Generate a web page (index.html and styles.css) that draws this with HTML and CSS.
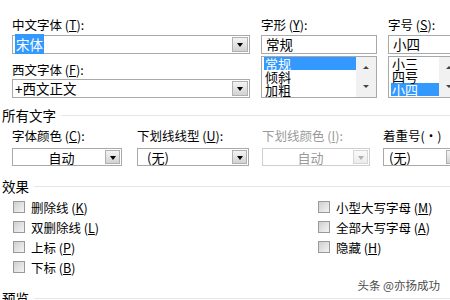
FILE: index.html
```html
<!DOCTYPE html>
<html lang="zh-CN">
<head>
    <meta charset="UTF-8">
    <meta name="viewport" content="width=device-width, initial-scale=1.0">
    <title>字体</title>
    <link rel="stylesheet" href="styles.css">
</head>
<body>
    <div class="dialog">
        <div class="font-grid">
            <div class="col">
                <label class="field-label">中文字体 (<u>T</u>):</label>
                <div class="combo">
                    <span class="combo-text"><span class="sel">宋体</span></span>
                    <span class="drop-btn"></span>
                </div>
                <label class="field-label second">西文字体 (<u>F</u>):</label>
                <div class="combo">
                    <span class="combo-text">+西文正文</span>
                    <span class="drop-btn"></span>
                </div>
            </div>

            <div class="col">
                <label class="field-label">字形 (<u>Y</u>):</label>
                <div class="textbox">常规</div>
                <div class="listbox">
                    <ul>
                        <li class="selected">常规</li>
                        <li>倾斜</li>
                        <li>加粗</li>
                    </ul>
                    <div class="scrollbar">
                        <span class="arrow up"></span>
                        <span class="arrow down"></span>
                    </div>
                </div>
            </div>

            <div class="col">
                <label class="field-label">字号 (<u>S</u>):</label>
                <div class="textbox">小四</div>
                <div class="listbox">
                    <ul>
                        <li>小三</li>
                        <li>四号</li>
                        <li class="selected">小四</li>
                    </ul>
                    <div class="scrollbar">
                        <span class="arrow up"></span>
                        <span class="arrow down"></span>
                    </div>
                </div>
            </div>
        </div>

        <div class="section-title">所有文字</div>

        <div class="all-text">
            <div class="cell">
                <label class="field-label">字体颜色 (<u>C</u>):</label>
                <div class="select w1">
                    <span class="select-text center">自动</span>
                    <span class="drop-btn"></span>
                </div>
            </div>
            <div class="cell">
                <label class="field-label">下划线线型 (<u>U</u>):</label>
                <div class="select w2">
                    <span class="select-text pad">(无)</span>
                    <span class="drop-btn"></span>
                </div>
            </div>
            <div class="cell disabled">
                <label class="field-label">下划线颜色 (<u>I</u>):</label>
                <div class="select w3">
                    <span class="select-text center">自动</span>
                    <span class="drop-btn"></span>
                </div>
            </div>
            <div class="cell">
                <label class="field-label">着重号(·)</label>
                <div class="select w4">
                    <span class="select-text">(无)</span>
                    <span class="drop-btn"></span>
                </div>
            </div>
        </div>

        <div class="section-title">效果</div>

        <div class="effects">
            <label class="check"><span class="box"></span>删除线 (<u>K</u>)</label>
            <label class="check"><span class="box"></span>小型大写字母 (<u>M</u>)</label>
            <label class="check"><span class="box"></span>双删除线 (<u>L</u>)</label>
            <label class="check"><span class="box"></span>全部大写字母 (<u>A</u>)</label>
            <label class="check"><span class="box"></span>上标 (<u>P</u>)</label>
            <label class="check"><span class="box"></span>隐藏 (<u>H</u>)</label>
            <label class="check"><span class="box"></span>下标 (<u>B</u>)</label>
        </div>

        <div class="section-title preview">预览</div>
    </div>

    <div class="watermark">头条 @亦扬成功</div>
</body>
</html>
```

FILE: styles.css
```css
* {
    margin: 0;
    padding: 0;
    box-sizing: border-box;
}

body {
    width: 450px;
    height: 300px;
    overflow: hidden;
    position: relative;
    background: #fff;
    color: #000;
    font-family: "Noto Sans CJK SC", sans-serif;
    font-size: 12.5px;
}

.dialog {
    padding-top: 17px;
}

.field-label {
    display: block;
    height: 16px;
    line-height: 16px;
    margin-bottom: 2px;
    white-space: nowrap;
}

.field-label.second {
    margin-top: 8px;
    margin-bottom: 1px;
}

/* top block: font / style / size */
.font-grid {
    display: grid;
    grid-template-columns: 238px 116px 72px;
    column-gap: 11px;
    padding-left: 12px;
}

.combo,
.textbox,
.select {
    display: flex;
    align-items: center;
    height: 19px;
    border: 1px solid #a9a9a9;
    background: #fff;
    padding: 1px;
    line-height: 15px;
    white-space: nowrap;
}

.combo-text {
    flex: 1;
    padding-left: 1px;
    font-size: 13.5px;
}

.textbox {
    padding-left: 4px;
    font-size: 13.5px;
}

.sel {
    background: #3399ff;
    color: #fff;
    padding: 0 1px;
}

.drop-btn {
    position: relative;
    width: 16px;
    height: 15px;
    border: 1px solid #b0b0b0;
    background: linear-gradient(#f4f4f4, #d2d2d2);
}

.drop-btn::after {
    content: "";
    position: absolute;
    left: 4px;
    top: 5px;
    border-left: 3.5px solid transparent;
    border-right: 3.5px solid transparent;
    border-top: 4px solid #000;
}

.listbox {
    display: flex;
    height: 42px;
    margin-top: 2px;
    border: 1px solid #a9a9a9;
    background: #fff;
}

.listbox ul {
    flex: 1;
    list-style: none;
    padding-left: 2px;
}

.listbox li {
    height: 13px;
    line-height: 13px;
    font-size: 13px;
    padding-left: 1px;
    white-space: nowrap;
}

.listbox li.selected {
    background: #3399ff;
    color: #fff;
}

.scrollbar {
    position: relative;
    width: 20px;
    background: #f1f1f1;
}

.arrow {
    position: absolute;
    left: 7px;
    border-left: 3px solid transparent;
    border-right: 3px solid transparent;
}

.arrow.up {
    top: 9px;
    border-bottom: 3px solid #444;
}

.arrow.down {
    bottom: 9px;
    border-top: 3px solid #444;
}

/* section headings with rule */
.section-title {
    display: flex;
    align-items: center;
    gap: 5px;
    height: 16px;
    line-height: 16px;
    margin-top: 9px;
    padding-left: 2px;
    font-size: 13.5px;
}

.section-title::after {
    content: "";
    flex: 1;
    height: 1px;
    background: #e6e6e6;
}

/* all text row */
.all-text {
    display: grid;
    grid-template-columns: 125px 125px 121px 1fr;
    padding-left: 12px;
    margin-top: 5px;
}

.cell .field-label {
    margin-bottom: 4px;
}

.select {
    height: 18px;
}

.select.w1 { width: 110px; }
.select.w2 { width: 112px; }
.select.w3 { width: 108px; }
.select.w4 { width: 80px; }

.select-text {
    flex: 1;
    padding-left: 4px;
    font-size: 13px;
}

.select-text.center {
    text-align: center;
}

.select-text.pad {
    padding-left: 8px;
}

.select .drop-btn {
    width: 15px;
    height: 14px;
}

.select .drop-btn::after {
    left: 3.5px;
}

.disabled .field-label,
.disabled .select-text {
    color: #9a9a9a;
}

.disabled .select {
    border-color: #cfcfcf;
}

.disabled .drop-btn {
    border-color: #d6d6d6;
    background: linear-gradient(#fafafa, #ececec);
}

.disabled .drop-btn::after {
    border-top-color: #b0b0b0;
}

/* effects */
.effects {
    display: grid;
    grid-template-columns: 305px 1fr;
    padding-left: 13px;
}

.section-title + .effects {
    margin-top: 3px;
}

.all-text + .section-title {
    margin-top: 12px;
}

.check {
    display: flex;
    align-items: center;
    height: 20px;
    white-space: nowrap;
}

.box {
    width: 12px;
    height: 12px;
    margin-right: 6px;
    border: 1px solid #999;
    background: linear-gradient(135deg, #cfcfcf, #f4f4f4);
}

.section-title.preview {
    margin-top: 13px;
}

.watermark {
    position: absolute;
    right: 10px;
    top: 277px;
    font-size: 11.5px;
    color: #4a4a4a;
    text-shadow: 0 0 2px #fff, 0 0 2px #fff;
    white-space: nowrap;
}
```
